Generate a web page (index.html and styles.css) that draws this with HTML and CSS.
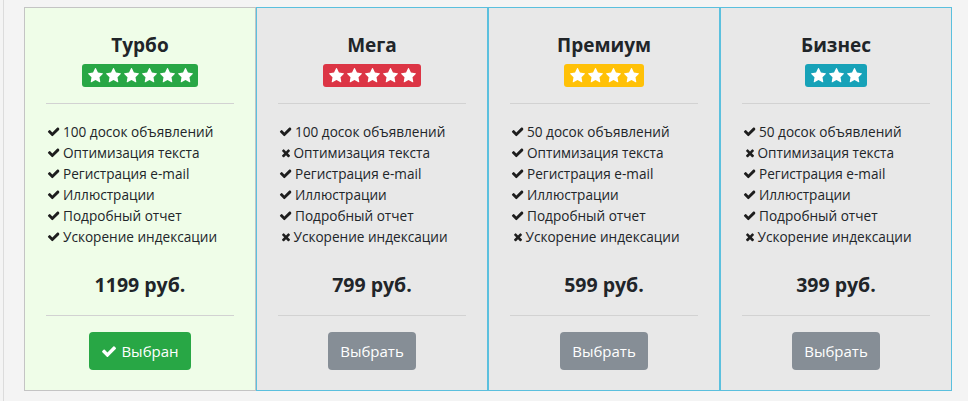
FILE: index.html
```html
<!DOCTYPE html>
<html lang="ru">
<head>
<meta charset="utf-8">
<link rel="stylesheet" href="styles.css">
</head>
<body>
<svg width="0" height="0" class="defs">
  <defs>
    <symbol id="star" viewBox="0 0 1664 1600"><path d="M1664 583q0 22-26 48l-363 354 86 500q1 7 1 20 0 21-10.500 35.500t-30.500 14.500q-19 0-40-12l-449-236-449 236q-22 12-40 12-21 0-31.500-14.500t-10.500-35.500q0-6 2-20l86-500-364-354q-25-27-25-48 0-37 56-46l502-73 225-455q19-41 49-41t49 41l225 455 502 73q56 9 56 46z" fill="currentColor"/></symbol>
    <symbol id="check" viewBox="0 200 1671 1300"><path d="M1671 566q0 40-28 68l-724 724-136 136q-28 28-68 28t-68-28l-136-136-362-362q-28-28-28-68t28-68l136-136q28-28 68-28t68 28l294 295 656-657q28-28 68-28t68 28l136 136q28 28 28 68z" fill="currentColor"/></symbol>
    <symbol id="times" viewBox="0 260 1490 1300"><path d="M1490 1322q0 40-28 68l-136 136q-28 28-68 28t-68-28l-294-294-294 294q-28 28-68 28t-68-28l-136-136q-28-28-28-68t28-68l294-294-294-294q-28-28-28-68t28-68l136-136q28-28 68-28t68 28l294 294 294-294q28-28 68-28t68 28l136 136q28 28 28 68t-28 68l-294 294 294 294q28 28 28 68z" fill="currentColor"/></symbol>
  </defs>
</svg>
<div class="wrap">
  <div class="plans">
    <div class="card card-active">
      <h3 class="title">Турбо</h3>
      <div class="badge badge-green">
        <svg class="star"><use href="#star"/></svg><svg class="star"><use href="#star"/></svg><svg class="star"><use href="#star"/></svg><svg class="star"><use href="#star"/></svg><svg class="star"><use href="#star"/></svg><svg class="star"><use href="#star"/></svg>
      </div>
      <hr class="sep">
      <ul class="features">
        <li><svg class="ic ic-check"><use href="#check"/></svg>100 досок объявлений</li>
        <li><svg class="ic ic-check"><use href="#check"/></svg>Оптимизация текста</li>
        <li><svg class="ic ic-check"><use href="#check"/></svg>Регистрация e-mail</li>
        <li><svg class="ic ic-check"><use href="#check"/></svg>Иллюстрации</li>
        <li><svg class="ic ic-check"><use href="#check"/></svg>Подробный отчет</li>
        <li><svg class="ic ic-check"><use href="#check"/></svg>Ускорение индексации</li>
      </ul>
      <div class="price">1199 руб.</div>
      <hr class="sep sep-low">
      <button class="btn btn-green"><svg class="btn-ic"><use href="#check"/></svg>Выбран</button>
    </div>
    <div class="card">
      <h3 class="title">Мега</h3>
      <div class="badge badge-red">
        <svg class="star"><use href="#star"/></svg><svg class="star"><use href="#star"/></svg><svg class="star"><use href="#star"/></svg><svg class="star"><use href="#star"/></svg><svg class="star"><use href="#star"/></svg>
      </div>
      <hr class="sep">
      <ul class="features">
        <li><svg class="ic ic-check"><use href="#check"/></svg>100 досок объявлений</li>
        <li><svg class="ic ic-times"><use href="#times"/></svg>Оптимизация текста</li>
        <li><svg class="ic ic-check"><use href="#check"/></svg>Регистрация e-mail</li>
        <li><svg class="ic ic-check"><use href="#check"/></svg>Иллюстрации</li>
        <li><svg class="ic ic-check"><use href="#check"/></svg>Подробный отчет</li>
        <li><svg class="ic ic-times"><use href="#times"/></svg>Ускорение индексации</li>
      </ul>
      <div class="price">799 руб.</div>
      <hr class="sep sep-low">
      <button class="btn btn-grey">Выбрать</button>
    </div>
    <div class="card">
      <h3 class="title">Премиум</h3>
      <div class="badge badge-yellow">
        <svg class="star"><use href="#star"/></svg><svg class="star"><use href="#star"/></svg><svg class="star"><use href="#star"/></svg><svg class="star"><use href="#star"/></svg>
      </div>
      <hr class="sep">
      <ul class="features">
        <li><svg class="ic ic-check"><use href="#check"/></svg>50 досок объявлений</li>
        <li><svg class="ic ic-check"><use href="#check"/></svg>Оптимизация текста</li>
        <li><svg class="ic ic-check"><use href="#check"/></svg>Регистрация e-mail</li>
        <li><svg class="ic ic-check"><use href="#check"/></svg>Иллюстрации</li>
        <li><svg class="ic ic-check"><use href="#check"/></svg>Подробный отчет</li>
        <li><svg class="ic ic-times"><use href="#times"/></svg>Ускорение индексации</li>
      </ul>
      <div class="price">599 руб.</div>
      <hr class="sep sep-low">
      <button class="btn btn-grey">Выбрать</button>
    </div>
    <div class="card">
      <h3 class="title">Бизнес</h3>
      <div class="badge badge-teal">
        <svg class="star"><use href="#star"/></svg><svg class="star"><use href="#star"/></svg><svg class="star"><use href="#star"/></svg>
      </div>
      <hr class="sep">
      <ul class="features">
        <li><svg class="ic ic-check"><use href="#check"/></svg>50 досок объявлений</li>
        <li><svg class="ic ic-times"><use href="#times"/></svg>Оптимизация текста</li>
        <li><svg class="ic ic-check"><use href="#check"/></svg>Регистрация e-mail</li>
        <li><svg class="ic ic-check"><use href="#check"/></svg>Иллюстрации</li>
        <li><svg class="ic ic-check"><use href="#check"/></svg>Подробный отчет</li>
        <li><svg class="ic ic-times"><use href="#times"/></svg>Ускорение индексации</li>
      </ul>
      <div class="price">399 руб.</div>
      <hr class="sep sep-low">
      <button class="btn btn-grey">Выбрать</button>
    </div>
  </div>
</div>
</body>
</html>
```
FILE: styles.css
```css
html, body {
  margin: 0;
  padding: 0;
  background: #f4f4f4;
  font-family: "Open Sans", "Noto Sans", sans-serif;
  color: #212529;
  height: 100%;
  overflow: hidden;
}
.defs {
  position: absolute;
  width: 0;
  height: 0;
}
.wrap {
  margin-left: 3px;
  border-left: 1px solid #dcdcdc;
  padding: 7px 0 0 20px;
  min-height: 100%;
  box-sizing: border-box;
}
.plans {
  display: flex;
}
.card {
  width: 232px;
  box-sizing: border-box;
  border: 1px solid #5bc0de;
  background: #e8e8e8;
  padding: 0 21px 20px;
  text-align: center;
}
.card-active {
  border-color: #c4c4c4;
  background: #effde8;
}
.title {
  margin: 25px 0 0;
  font-size: 19px;
  line-height: 24px;
  font-weight: 700;
}
.badge {
  display: inline-flex;
  align-items: center;
  height: 23px;
  padding: 0 4px;
  margin-top: 7px;
  border-radius: 3px;
  vertical-align: top;
}
.badge-green { background: #28a745; }
.badge-red { background: #dc3545; }
.badge-yellow { background: #ffc107; }
.badge-teal { background: #17a2b8; }
.star {
  width: 15px;
  height: 15px;
  margin: 0 1.5px;
  color: #fff;
}
.sep {
  border: 0;
  border-top: 1px solid #d2d2d2;
  margin: 16px 0 0;
  height: 0;
}
.features {
  list-style: none;
  padding: 0 0 0 1px;
  margin: 17px 0 0;
  text-align: left;
  font-size: 13.6px;
  line-height: 21px;
}
.features li {
  display: flex;
  align-items: center;
  white-space: nowrap;
}
.ic {
  color: #1e1e1e;
  flex: none;
}
.ic-check {
  width: 12.5px;
  height: 10.5px;
  margin-right: 3.5px;
}
.ic-times {
  width: 10px;
  height: 10px;
  margin-right: 4px;
  margin-left: 0.5px;
}
.price {
  margin-top: 26px;
  font-size: 19.5px;
  line-height: 24px;
  font-weight: 700;
}
.sep-low {
  margin-top: 18px;
}
.btn {
  margin-top: 16px;
  height: 38px;
  padding: 0 12px;
  border: 0;
  border-radius: 4px;
  font-family: inherit;
  font-size: 15px;
  color: #fff;
  display: inline-flex;
  align-items: center;
  cursor: pointer;
}
.btn-green { background: #28a745; }
.btn-grey { background: #868e96; }
.btn-ic {
  width: 15px;
  height: 12px;
  margin-right: 5px;
  color: #fff;
}
```
